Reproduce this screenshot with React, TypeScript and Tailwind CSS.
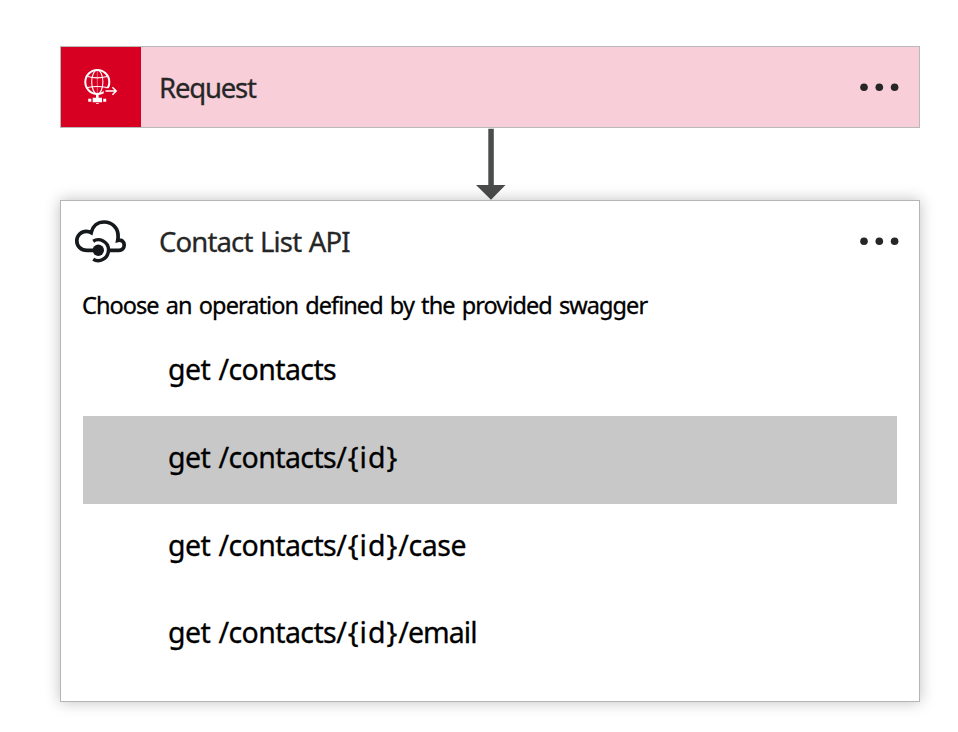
import React from "react";

function Dots() {
  return (
    <svg className="mr-[20px] h-[10px] w-[40px] shrink-0" viewBox="0 0 40 10" fill="#262626">
      <circle cx="5" cy="5.2" r="3.8" />
      <circle cx="20.3" cy="5.2" r="3.8" />
      <circle cx="35.6" cy="5.2" r="3.8" />
    </svg>
  );
}

function GlobeIcon() {
  return (
    <svg className="h-[80px] w-[80px]" viewBox="61 47 80 80" fill="none" stroke="#fff">
      <circle cx="97.3" cy="82" r="12" strokeWidth="2" />
      <ellipse cx="97.3" cy="82" rx="5.6" ry="12" strokeWidth="1.1" />
      <path d="M97.3 70v24" strokeWidth=".4" />
      <path d="M87.5 76.5q9.8 2.8 19.6 0M87.5 87.5q9.8-2 19.6 0" strokeWidth="1.1" />
      <path d="M103.7 91h14" stroke="#d80022" strokeWidth="5.5" />
      <path d="M105.5 91h10M112.4 87.2l3.8 3.8-3.8 3.8" strokeWidth="1.5" />
      <path d="M97.3 94v5" strokeWidth="2.6" />
      <path d="M88.2 98.7h3.1v3h-3.1zM92.7 97.8h9.3v4.5h-9.3zM103.2 98.7h3v3h-3zM96 103.2h2.8v.9H96z" fill="#fff" stroke="none" />
    </svg>
  );
}

function CloudIcon() {
  return (
    <svg className="h-[80px] w-[80px]" viewBox="61 201 80 80" fill="none" stroke="#15191c" strokeWidth="3.7">
      <path d="M98 250.3H87c-6 0-10.2-4-10.2-9.4 0-5.7 4.5-9.6 9.6-9.6 1.8 0 3.3.4 4.8 1.3 1.4-6.2 6.2-10.6 12.9-10.6 8.2 0 14.5 6.1 14 15.3-.1 1.2-.2 1.8-.4 3.1 3.7-1.2 6.5 1.4 6.5 4.700 0 3.100-2.200 5.200-5.300 5.200H109" />
      <path d="M93.2 241.2c6-3.800 15.300.2 15.300 8.700 0 8.900-9.200 13.100-15.300 9.400" strokeWidth="3.400" />
      <circle cx="98.3" cy="250.3" r="5.7" fill="#15191c" stroke="none" />
    </svg>
  );
}

const operations = [
  { path: "get /contacts", id: "", tail: "", row: "pb-[6px]", tailStyle: "" },
  { path: "get /contacts", id: "/{id}", tail: "", row: "bg-[#c8c8c8] pb-[6px]", tailStyle: "" },
  { path: "get /contacts", id: "/{id}", tail: "/case", row: "pb-[6px]", tailStyle: "tracking-[-0.4px]" },
  { path: "get /contacts", id: "/{id}", tail: "/email", row: "pb-[8px]", tailStyle: "tracking-[-0.95px]" },
];

export default function App() {
  return (
    <main className="flex h-[732px] w-[958px] flex-col bg-white pl-[60px] pt-[46px] font-['Noto_Sans',sans-serif]">
      <header className="flex h-[82px] w-[860px] shrink-0 items-center border border-[#b9b9b9] bg-[#f8ced8]">
        <div className="h-[80px] w-[80px] bg-[#d80022]"><GlobeIcon /></div>
        <h1 className="ml-[18px] flex-1 whitespace-nowrap pt-[2px] text-[27.5px] leading-[40px] tracking-[-1.2px] text-[#262626] [-webkit-text-stroke:0.3px_#262626]">Request</h1>
        <Dots />
      </header>
      <div className="h-[72px] w-[860px] shrink-0">
        <svg className="ml-[415px] h-[72px] w-[32px]" viewBox="475 128 32 72" fill="#4a4c4c">
          <path d="M488.300 128.800h5.500v56.200h11.700L491 199.700 476 185h12.300z" />
        </svg>
      </div>
      <section className="h-[502px] w-[860px] shrink-0 border border-[#b5b5b5] bg-white shadow-[0_0_14px_rgba(0,0,0,0.25)]">
        <div className="flex h-[80px] items-center">
          <CloudIcon />
          <h2 className="ml-[18px] flex-1 whitespace-nowrap pt-[2px] text-[27.5px] leading-[40px] tracking-[-0.85px] [word-spacing:1.2px] text-[#262626] [-webkit-text-stroke:0.3px_#262626]">Contact List API</h2>
          <Dots />
        </div>
        <p className="ml-[21px] h-[47px] whitespace-nowrap text-[23.5px] leading-[48px] tracking-[-0.94px] [word-spacing:2px] text-black [-webkit-text-stroke:0.3px_#000]">Choose an operation defined by the provided swagger</p>
        <ul className="ml-[22px] w-[814px] text-[28.5px] text-black [-webkit-text-stroke:0.3px_#000]">
          {operations.map((o) => (
            <li key={o.path + o.id + o.tail} className={`flex h-[88px] items-center whitespace-nowrap pl-[85px] ${o.row}`}>
              <span className="tracking-[-0.6px] [word-spacing:1.6px]">{o.path}</span>
              <span className="tracking-[1px]">{o.id}</span>
              <span className={o.tailStyle}>{o.tail}</span>
            </li>
          ))}
        </ul>
      </section>
    </main>
  );
}
